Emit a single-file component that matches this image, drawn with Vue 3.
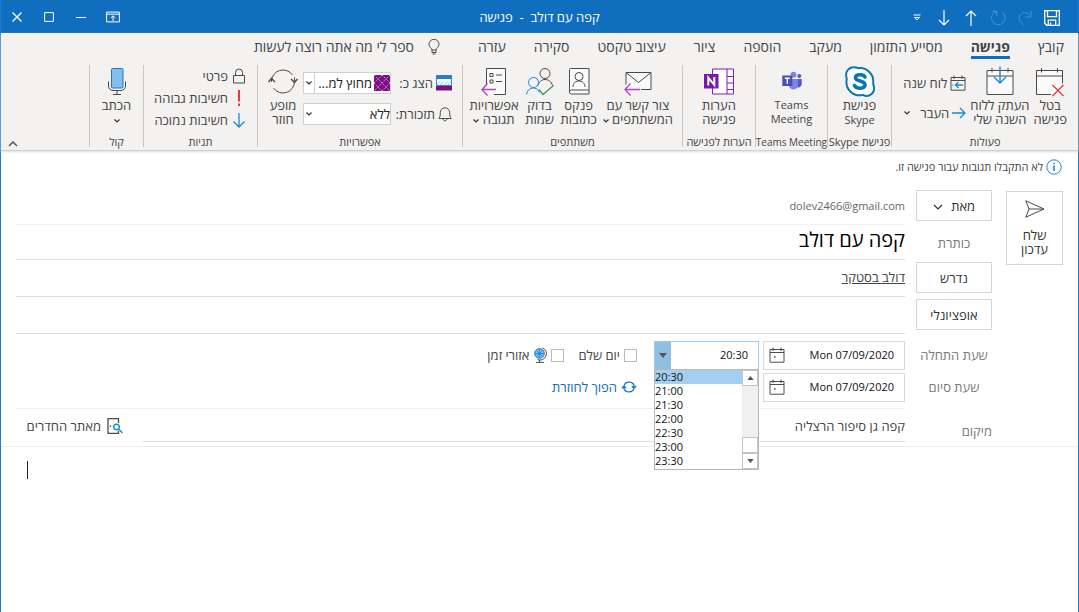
<script setup>
import { ref } from 'vue'

const tabs = ['קובץ', 'פגישה', 'מסייע התזמון', 'מעקב', 'הוספה', 'ציור', 'עיצוב טקסט', 'סקירה', 'עזרה']
const activeTab = ref('פגישה')
const times = ['20:30', '21:00', '21:30', '22:00', '22:30', '23:00', '23:30']
const startTime = ref('20:30')
const startDate = ref('Mon 07/09/2020')
const endDate = ref('Mon 07/09/2020')
const subject = ref('קפה עם דולב')
const location = ref('קפה גן סיפור הרצליה')
const required = ref('דולב בסטקר')
const optional = ref('')
</script>

<template>
  <div class="window" dir="rtl">
    <header class="titlebar">
      <div class="quick">
        <button aria-label="שמור"><svg width="16" height="16" viewBox="0 0 16 16"><path d="M.7.7h14.6v14.6H2.8L.7 13.2zM3.500.7v6h9v-6M4.300 15.300v-5.200h7.400v5.200M6.600 15v-2.600" stroke-width="1.3" /></svg></button>
        <button class="dim" aria-label="בצע שוב"><svg width="16" height="16" viewBox="0 0 16 16"><path d="M14 1v6H8.500M13.700 6.700C11 2 6 1.800 3.600 4.400 1 7.500 2 11.500 6.500 15" /></svg></button>
        <button class="dim" aria-label="בטל"><svg width="16" height="16" viewBox="0 0 16 16"><path d="M2 1.200h4.800V6M6.500 1.500C2 3 .5 7.500 2.300 11c2 3.800 7.200 4.800 10.500 2 3.400-3 2.800-8-.6-10.600" /></svg></button>
        <button aria-label="הקודם"><svg width="16" height="16" viewBox="0 0 16 16"><path d="M8 16V1M3 6l5-5 5 5" stroke-width="1.200" /></svg></button>
        <button aria-label="הבא"><svg width="16" height="16" viewBox="0 0 16 16"><path d="M8 0v15M3 10l5 5 5-5" stroke-width="1.200" /></svg></button>
        <button aria-label="התאמה אישית"><svg width="8" height="8" viewBox="0 0 8 8"><path d="M.5 1h7M1.500 3.500h5L4 6z" /></svg></button>
      </div>
      <h1>קפה עם דולב&nbsp; -&nbsp; פגישה</h1>
      <div class="controls">
        <button aria-label="אפשרויות תצוגה"><svg width="14" height="12" viewBox="0 0 14 12"><path d="M.6 1.100h12.800v9.800H.6zM.6 3.200h12.800M7 10V5M4.700 7 7 4.800 9.300 7" /></svg></button>
        <button aria-label="מזער"><svg width="10" height="10" viewBox="0 0 10 10"><path d="M0 5.500h10" /></svg></button>
        <button aria-label="הגדל"><svg width="10" height="10" viewBox="0 0 10 10"><path d="M.6.6h8.800v8.800H.6z" /></svg></button>
        <button aria-label="סגור"><svg width="10" height="10" viewBox="0 0 10 10"><path d="m.5.500 9 9m0-9-9 9" stroke-width="1.300" /></svg></button>
      </div>
    </header>

    <div class="ribbon">
      <nav class="tabs">
        <button v-for="tab in tabs" :key="tab" :class="{ active: tab === activeTab }" @click="activeTab = tab">{{ tab }}</button>
        <button class="tell"><svg width="12" height="16" viewBox="0 0 12 16"><path d="M4 11C4 9 1 8.500 1 5.300a5 5 0 0 1 10 0C11 8.500 8 9 8 11zM4 11v2.500h4V11M4.500 15h3" /></svg>ספר לי מה אתה רוצה לעשות</button>
      </nav>

      <div class="groups">
        <section class="group actions">
          <div class="tools">
            <button class="big"><svg width="30" height="30" viewBox="0 0 30 30"><path d="M1.500 4h26v24h-26z" fill="#fafafa" stroke="none" /><path d="M16 28H1.500V4h26v13M1.500 9.500h26M6.500 1.500V6M22.500 1.500V6" /><path d="m17.500 18.500 11 11m0-11-11 11" stroke="#e8383d" stroke-width="1.300" /></svg><span>בטל<br>פגישה</span></button>
            <button class="big"><svg width="30" height="30" viewBox="0 0 30 30"><path d="M2 4h26v24H2z" fill="#fafafa" /><path d="M2 9.500h26M7 1.500V6M23 1.500V6" /><path d="M15 0v16M9 10.500l6 6 6-6" stroke="#1e88d2" stroke-width="1.400" /></svg><span>העתק ללוח<br>השנה שלי</span></button>
            <div class="stack two">
              <button class="small"><svg width="16" height="16" viewBox="0 0 16 16"><path d="M1 2.500h14v12.700H1zM1 5.500h14M4 .5v3.500M12 .5v3.500" /><path d="M13 10H6M8.500 7 5.500 10l3 3" stroke="#1e88d2" stroke-width="1.300" /><path d="M2.500 10h1" /></svg>לוח שנה</button>
              <button class="small"><svg width="14" height="14" viewBox="0 0 14 14"><path d="M0 7h13M8 2l5 5-5 5" stroke="#1e88d2" stroke-width="1.300" /></svg>העבר<svg class="chev far" width="6" height="4" viewBox="0 0 6 4"><path d="m.5.500 2.500 2.500L5.500.5" /></svg></button>
            </div>
          </div>
          <h2>פעולות</h2>
        </section>

        <section class="group skype">
          <div class="tools">
            <button class="big"><svg width="30" height="32" viewBox="0 0 30 32"><path d="M8.300 1.800A7.500 7.500 0 0 0 1.300 11c.4 1 .5 1.500.4 3A13.300 13.300 0 0 0 18 29.400a7.500 7.500 0 0 0 10.600-9.300c-.4-1-.5-1.600-.4-3A13.300 13.300 0 0 0 13 2.700a7.500 7.500 0 0 0-4.700-.9z" fill="#fff" stroke="#0a77ae" stroke-width="2" /><path d="M20 11.500C19 8.800 10.500 8 10.500 12.300c0 4 9.500 2.600 9.500 7 0 4.600-9 4.200-10.500.7" stroke="#0a77ae" stroke-width="3.600" stroke-linecap="round" /></svg><span>פגישת<br><b class="latin">Skype</b></span></button>
          </div>
          <h2>פגישת Skype</h2>
        </section>

        <section class="group teams">
          <div class="tools">
            <button class="big"><svg width="20" height="20" viewBox="0 0 20 20" class="solid"><circle cx="17.300" cy="4.500" r="2" fill="#5059c9" /><circle cx="11.500" cy="3.200" r="2.900" fill="#7b83eb" /><path d="M14.500 7.500h5.200v5a3.500 3.500 0 0 1-5.200 3z" fill="#5059c9" /><path d="M7 7.500h9V14a4.600 4.600 0 0 1-9 .5z" fill="#7b83eb" /><path d="M.3 4h10v10.500H.3z" fill="#464eb8" /><path d="M2.800 6.800h5M5.300 6.800v5.400" stroke="#fff" stroke-width="1.400" /></svg><span class="latin">Teams<br>Meeting</span></button>
          </div>
          <h2>Teams Meeting</h2>
        </section>

        <section class="group notes">
          <div class="tools">
            <button class="big"><svg width="30" height="28" viewBox="0 0 30 28"><path d="M8.500 1.500h21v25h-21z" fill="#fff" stroke="#7d1fb0" /><path d="M23 1.500v25M23 9h6.500M23 15.500h6.500M23 22h6.500" stroke="#7d1fb0" /><path d="M0 6.500h14.500V21H0z" fill="#7719aa" stroke="none" /><path d="M4.300 18V10l6 7.500v-8" stroke="#fff" stroke-width="2" /></svg><span>הערות<br>פגישה</span></button>
          </div>
          <h2>הערות לפגישה</h2>
        </section>

        <section class="group people">
          <div class="tools">
            <button class="big"><svg width="30" height="28" viewBox="0 0 30 28"><path d="M3 5h25v17H3z" fill="#fafafa" stroke="none" /><path d="M3 17V5h25v17H18M3 5l12.500 10L28 5" /><path d="M17 22H2M7.500 16 2 22l5.500 6" stroke="#b146c2" stroke-width="1.300" /></svg><span>צור קשר עם<br>המשתתפים <svg class="chev" width="6" height="4" viewBox="0 0 6 4"><path d="m.5.500 2.500 2.500L5.500.5" /></svg></span></button>
            <button class="big"><svg width="22" height="28" viewBox="0 0 22 28"><path d="M2.500 1h18.500v25.500H3.500a2 2 0 0 1-2-2V2a1 1 0 0 1 1-1zM1.500 24a2 2 0 0 1 2-1.500H21" fill="#fafafa" /><circle cx="11" cy="9" r="4" /><path d="M5 19.500c0-8 12-8 12 0" /></svg><span>פנקס<br>כתובות</span></button>
            <button class="big"><svg width="30" height="28" viewBox="0 0 30 28"><circle cx="20" cy="6" r="5" /><path d="M13 18c1.500-8 12.500-8 14.500 0" /><g stroke="#1e88d2"><circle cx="8.500" cy="15" r="5" /><path d="M1.500 27c1-8 11-8.500 13-2" /></g><path d="m14 22 4 5L28.500 18" stroke="#3c9a50" stroke-width="1.300" /></svg><span>בדוק<br>שמות</span></button>
            <button class="big"><svg width="30" height="28" viewBox="0 0 30 28"><path d="M7.500 1h19v26h-19z" fill="#fafafa" stroke="none" /><path d="M7.500 17V1h19v26H15M11 6h3v3h-3zM11 12.500h3v3h-3zM17 7.500h6M17 14h6" /><path d="M17 22H3M8.500 16 3 22l5.500 6" stroke="#b146c2" stroke-width="1.300" /></svg><span>אפשרויות<br>תגובה <svg class="chev" width="6" height="4" viewBox="0 0 6 4"><path d="m.5.500 2.500 2.500L5.500.5" /></svg></span></button>
          </div>
          <h2>משתתפים</h2>
        </section>

        <section class="group options">
          <div class="tools">
            <div class="fields">
              <label for="show-as"><svg width="16" height="16" viewBox="0 0 16 16"><path d="M.5.500h15v10H.5z" fill="#fff" stroke="#1e88d2" /><path d="M.5.500h15v3.500H.5z" fill="#2b7fc4" stroke="none" /><path d="M1 10 4 6.500M4.500 10l3-3.500M8.500 10l3-3.500M12 10l3-3.500" stroke="#8cc4ee" /><path d="M0 11h16v4.500H0z" fill="#80107f" stroke="none" /></svg>הצג כ:</label>
              <div class="combo">
                <svg width="16" height="16" viewBox="0 0 16 16"><path d="M0 0h16v16H0z" fill="#7b1080" stroke="none" /><path d="m0 0 16 16M8 0l8 8M0 8l8 8M16 0 0 16M8 0 0 8M16 8l-8 8" stroke="#d292d4" stroke-dasharray="1.500 1" /></svg>
                <select id="show-as"><option>מחוץ למ...</option></select>
                <i class="split"></i>
                <svg class="chev" width="6" height="4" viewBox="0 0 6 4"><path d="m.5.500 2.500 2.500L5.500.5" /></svg>
              </div>
              <label for="reminder"><svg width="14" height="16" viewBox="0 0 14 16"><path d="M.8 12.500C2 11 2.300 10 2.300 6.500a4.700 4.700 0 0 1 9.400 0c0 3.500.3 4.500 1.500 6zM5 12.800c0 2.600 4 2.600 4 0" /></svg>תזכורת:</label>
              <div class="combo">
                <select id="reminder"><option>ללא</option></select>
                <svg class="chev" width="6" height="4" viewBox="0 0 6 4"><path d="m.5.500 2.500 2.500L5.500.5" /></svg>
              </div>
            </div>
            <button class="big"><svg width="30" height="28" viewBox="0 0 30 28"><path d="M3.500 14A11.500 11.500 0 0 1 24.500 7.500M26.500 14A11.500 11.500 0 0 1 5.500 20.500M3.500 10v4M26.500 14V10" /><path d="M.5 14.500 3.500 11l3.500 3.500M23 11.500l3.500 3.500 3-3.500" stroke-width="1.400" /></svg><span>מופע<br>חוזר</span></button>
          </div>
          <h2>אפשרויות</h2>
        </section>

        <section class="group tags">
          <div class="tools">
            <div class="stack three">
              <button class="small"><svg width="14" height="16" viewBox="0 0 14 16"><path d="M1.500 7.500h11v7.500h-11zM3.500 7.500V4.500a3.500 3.500 0 0 1 7 0v3" /></svg>פרטי</button>
              <button class="small"><svg width="14" height="16" viewBox="0 0 14 16"><path d="M7 0v11.500M7 13.500V16" stroke="#e8383d" stroke-width="2" /></svg>חשיבות גבוהה</button>
              <button class="small"><svg width="14" height="16" viewBox="0 0 14 16"><path d="M7 1v14M1.500 9.500 7 15l5.500-5.500" stroke="#1e88d2" stroke-width="1.300" /></svg>חשיבות נמוכה</button>
            </div>
          </div>
          <h2>תגיות</h2>
        </section>

        <section class="group voice">
          <div class="tools">
            <button class="big"><svg width="20" height="28" viewBox="0 0 20 28"><path d="M1.500 14v4.500a4.500 4.500 0 0 0 4.500 4.500h8a4.500 4.500 0 0 0 4.500-4.500V14M10 23v4M6 27h8" /><rect x="4.500" y="1" width="11.500" height="19.500" rx="1" fill="#83beec" stroke="#1e78c8" /></svg><span>הכתב<br><svg class="chev" width="6" height="4" viewBox="0 0 6 4"><path d="m.5.500 2.500 2.500L5.500.5" /></svg></span></button>
          </div>
          <h2>קול</h2>
        </section>
        <button class="collapse" aria-label="כווץ רצועת כלים"><svg width="10" height="6" viewBox="0 0 10 6"><path d="m1 5 4-4 4 4" stroke-width="1.300" /></svg></button>
      </div>
    </div>

    <main>
      <p class="info"><svg width="16" height="16" viewBox="0 0 16 16"><circle cx="8" cy="8" r="7.200" stroke="#1e8ad6" /><path d="M8 6.500v5.500M8 3.800v1.500" stroke="#1e8ad6" stroke-width="1.600" /></svg>לא התקבלו תגובות עבור פגישה זו.</p>

      <form class="form" @submit.prevent>
        <button class="box send"><svg width="20" height="18" viewBox="0 0 20 18"><path d="m.8.800 18.200 8.200L.8 17.200 4 9zM4 9h15" /></svg>שלח<br>עדכון</button>
        <div class="rows">
          <div class="row">
            <button class="box">מאת <svg class="chev wide" width="10" height="6" viewBox="0 0 10 6"><path d="m1 1 4 4 4-4" /></svg></button>
            <div class="line faint"><span class="mail latin">dolev2466@gmail.com</span></div>
          </div>
          <div class="row title">
            <label for="subject">כותרת</label>
            <div class="line"><input id="subject" v-model="subject" class="subject"></div>
          </div>
          <div class="row">
            <button class="box">נדרש</button>
            <div class="line"><input v-model="required" class="required" aria-label="נדרש"></div>
          </div>
          <div class="row">
            <button class="box">אופציונלי</button>
            <div class="line"><input v-model="optional" aria-label="אופציונלי"></div>
          </div>

          <div class="row when first">
            <label for="start-date">שעת התחלה</label>
            <div class="date"><input id="start-date" v-model="startDate" dir="ltr"><svg width="16" height="16" viewBox="0 0 16 16"><path d="M1 2.500h14v12.700H1zM1 5.500h14M4 .5v3.500M12 .5v3.500" /><path d="M5 10h1.600" stroke-width="1.600" /></svg></div>
            <div class="time open">
              <input v-model="startTime" dir="ltr" aria-label="שעה">
              <button class="drop" aria-label="פתח"><svg class="tri" width="8" height="5" viewBox="0 0 8 5"><path d="M0 0h8L4 5z" /></svg></button>
              <div class="popup" dir="ltr">
                <ul role="listbox" aria-label="שעות">
                  <li v-for="t in times" :key="t" role="option" :class="{ picked: t === startTime }" :aria-selected="t === startTime" @click="startTime = t">{{ t }}</li>
                </ul>
                <div class="scroll">
                  <button aria-label="למעלה"><svg class="tri" width="7" height="4" viewBox="0 0 8 5"><path d="M0 5h8L4 0z" /></svg></button>
                  <i></i>
                  <button aria-label="למטה"><svg class="tri" width="7" height="4" viewBox="0 0 8 5"><path d="M0 0h8L4 5z" /></svg></button>
                </div>
              </div>
            </div>
            <div class="extras">
              <label><input type="checkbox">יום שלם</label>
              <label><input type="checkbox"><svg width="14" height="16" viewBox="0 0 14 16"><circle cx="6.500" cy="6.500" r="4.800" fill="#7cc0ee" stroke="#1476c4" /><path d="M2 6.500h9M6.500 2v9M3.500 3.500l6 6M9.500 3.500l-6 6" stroke="#1476c4" stroke-width=".7" /><path d="M9.500.8a6.300 6.300 0 0 1-5 11.800M6.500 13v2.500M3 15.400h8" /></svg>אזורי זמן</label>
            </div>
          </div>
          <div class="row when">
            <label for="end-date">שעת סיום</label>
            <div class="date"><input id="end-date" v-model="endDate" dir="ltr"><svg width="16" height="16" viewBox="0 0 16 16"><path d="M1 2.500h14v12.700H1zM1 5.500h14M4 .5v3.500M12 .5v3.500" /><path d="M5 10h1.600" stroke-width="1.600" /></svg></div>
            <div class="time"></div>
            <div class="extras">
              <a href="#"><svg width="16" height="14" viewBox="0 0 16 14"><path d="M3 5.500A5.500 5.500 0 0 1 13 5v2.500M13 8.500A5.500 5.500 0 0 1 3 9V6.500M.8 8.200 3 6l2.200 2.200M10.800 6 13 8.200 15.200 6" stroke="#0f6cbd" stroke-width="1.200" /></svg>הפוך לחוזרת</a>
            </div>
          </div>
          <div class="row place">
            <label for="place">מיקום</label>
            <div class="whereabouts">
              <div class="line"><input id="place" v-model="location"></div>
              <button class="finder"><svg width="16" height="16" viewBox="0 0 16 16"><path d="M11.500 5V.7H1v14.600h10.500V13M3.500 7.500v1.500" stroke-width="1.300" /><g stroke="#1e8ad6" stroke-width="1.400"><circle cx="9.500" cy="9" r="2.800" /><path d="m11.500 11 4 4" /></g></svg>מאתר החדרים</button>
            </div>
          </div>
        </div>
      </form>
      <div class="body"><i class="caret"></i></div>
    </main>
  </div>
</template>

<style>
html, body, #app { height: 100%; }
</style>

<style scoped>
* { box-sizing: border-box; }
.window {
  min-height: 100%;
  display: flex;
  flex-direction: column;
  border: solid #1a7fd4;
  border-width: 0 1px;
  background: #fff;
  color: #444;
  font: 13px/14px "Open Sans", "Noto Sans", "DejaVu Sans", sans-serif;
}
button, input, select { font: inherit; color: inherit; background: none; border: 0; padding: 0; margin: 0; min-width: 0; border-radius: 0; }
button { white-space: nowrap; }
h1, h2, p, ul { margin: 0; padding: 0; font: inherit; list-style: none; }
svg { fill: none; stroke: #4a4a4a; stroke-width: 1; flex: none; }
svg.tri { fill: #555; stroke: none; }
svg.solid { stroke: none; }
svg.chev { stroke: #333; stroke-width: 1.2; vertical-align: middle; }
.latin { font-size: 11px; font-weight: 400; }

.titlebar {
  height: 33px;
  display: grid;
  grid-template-columns: 1fr auto 1fr;
  align-items: center;
  background: #106ebe;
  color: #fff;
}
.titlebar svg { stroke: #fff; display: block; }
.titlebar .dim svg { stroke: #4b94d2; }
.quick, .controls { display: flex; align-items: center; }
.quick { padding-right: 13px; padding-top: 3px; }
.quick button { width: 27px; display: flex; justify-content: center; }
.controls { justify-content: flex-end; }
.controls button { width: 32px; display: flex; justify-content: center; }

.ribbon { background: #f3f2f1; border-bottom: 1px solid #d2d0ce; box-shadow: 0 1px 2px #ddd; height: 118px; }
.tabs { display: flex; gap: 28px; padding: 4px 14px 0; height: 31px; font-size: 14px; }
.tabs button { border-bottom: 3px solid transparent; line-height: 18px; height: 22px; }
.tabs .active { font-weight: 700; border-color: #106ebe; }
.tabs .tell { display: flex; align-items: center; gap: 14px; margin-right: 10px; }

.groups { display: flex; height: 84px; }
.group { height: 82px; margin-top: 1px; border-left: 1px solid #c8c6c4; display: flex; flex-direction: column; justify-content: space-between; }
.group h2 { text-align: center; font-size: 11px; line-height: 12px; white-space: nowrap; height: 11px; }
.group.teams h2 { font-size: 10px; }
.tools { display: flex; justify-content: center; height: 62px; }
.big { display: flex; flex-direction: column; align-items: center; }
.big > svg { height: 33px; }
.big > span { display: block; line-height: 14px; }
.small { display: flex; align-items: center; gap: 3px; line-height: 16px; }
.chev.far { margin-right: 7px; }
.stack { display: flex; flex-direction: column; align-items: flex-start; }
.two { gap: 14px; padding-top: 10px; }
.three { gap: 6px; padding-top: 3px; }
.three .small { gap: 4px; }
.actions { width: 187px; }
.actions .tools { justify-content: flex-start; gap: 4px; padding-right: 11px; }
.skype { width: 64px; }
.teams { width: 72px; }
.notes { width: 73px; }
.people { width: 220px; }
.people .tools { gap: 6px; justify-content: flex-start; padding-right: 9px; }
.options { width: 205px; }
.options .tools { gap: 5px; justify-content: flex-start; padding-right: 10px; }
.fields { display: grid; grid-template-columns: 57px 88px; gap: 9px 4px; align-content: start; padding-top: 7px; }
.fields label { display: flex; align-items: center; gap: 3px; white-space: nowrap; }
.combo { height: 22px; border: 1px solid #d2d0ce; background: #fff; display: flex; align-items: center; gap: 2px; padding-left: 2px; color: #222; }
.combo select { appearance: none; flex: 1; }
.combo .split { width: 1px; height: 20px; background: #d2d0ce; }
.tags { width: 114px; }
.tags .tools { justify-content: flex-start; padding-right: 11px; }
.voice { width: 54px; }
.collapse { margin-right: auto; align-self: flex-end; padding: 0 7px 1px; display: flex; }

main { flex: 1; display: flex; flex-direction: column; }
.info { display: flex; align-items: center; gap: 3px; padding: 8px 16px 0; height: 24px; font-size: 11px; }
.form { display: flex; align-items: flex-start; gap: 14px; padding: 13px 15px 0; border-bottom: 1px solid #eee; height: 272px; }
.box { border: 1px solid #d6d6d6; background: #fff; height: 31px; width: 76px; color: #333; }
.send { width: 57px; height: 74px; margin-top: 3px; }
.send svg { display: block; margin: 0 auto 10px; }
.rows { flex: 1; min-width: 0; }
.row { display: flex; align-items: center; gap: 11px; height: 37px; }
.row.title { height: 35px; }
.row > label { width: 76px; text-align: center; color: #7a7a7a; }
.row .box { align-self: flex-start; margin-top: 2px; }
.row .chev.wide { margin-right: 5px; }
.line { flex: 1; height: 100%; border-bottom: 1px solid #dedede; display: flex; align-items: center; min-width: 0; }
.line.faint { border-color: #f0f0f0; }
.line input { width: 100%; outline: 0; }
.mail { color: #666; }
.line .subject { font-size: 20px; line-height: 26px; color: #000; padding-bottom: 4px; }
.line .required { text-decoration: underline; padding-bottom: 2px; }
.when { height: 32px; gap: 4px; }
.when.first { margin-top: 5px; }
.when > label { margin-left: 7px; }
.date, .time { height: 29px; border: 1px solid #d9d9d9; display: flex; align-items: center; color: #111; background: #fff; font-size: 11px; }
.date { width: 142px; justify-content: space-between; padding: 0 10px 0 5px; }
.date input { width: 96px; text-align: right; }
.time { width: 105px; position: relative; padding-right: 10px; }
.time > input { width: 78px; text-align: right; outline: 0; }
.time.open { border-color: #9acbf0; }
.drop { width: 16px; height: 27px; background: #8fc0e2; margin-right: auto; }
.drop svg { display: block; margin: auto; }
.popup { position: absolute; z-index: 1; top: 27px; left: -1px; right: -1px; background: #fff; border: 1px solid #b8b8b8; display: flex; }
.popup ul { flex: 1; padding-bottom: 1px; }
.popup li { height: 14px; line-height: 14px; }
.popup .picked { background: #a5cff0; }
.scroll { width: 16px; background: #f0f0f0; display: flex; flex-direction: column; }
.scroll button, .scroll i { height: 16px; border: 1px solid #c4c4c4; background: #fff; display: grid; place-items: center; }
.scroll i { margin-top: auto; }
.extras { display: flex; gap: 14px; margin-right: 13px; }
.extras label, .extras a { display: flex; align-items: center; gap: 4px; white-space: nowrap; }
.extras a { color: #0f6cbd; text-decoration: none; }
.extras input { appearance: none; width: 13px; height: 13px; border: 1px solid #bbb; background: #fff; }
.place { height: 38px; margin-top: 5px; align-items: stretch; }
.place > label { text-align: right; line-height: 46px; }
.whereabouts { flex: 1; display: flex; border-top: 1px solid #f0f0f0; align-items: flex-start; }
.place .line { height: 33px; padding-top: 2px; }
.finder { width: 127px; height: 34px; display: flex; align-items: center; gap: 6px; padding-right: 20px; }
.body { flex: 1; padding: 14px 26px; display: flex; justify-content: flex-end; }
.caret { width: 1px; height: 18px; background: #222; }
</style>
